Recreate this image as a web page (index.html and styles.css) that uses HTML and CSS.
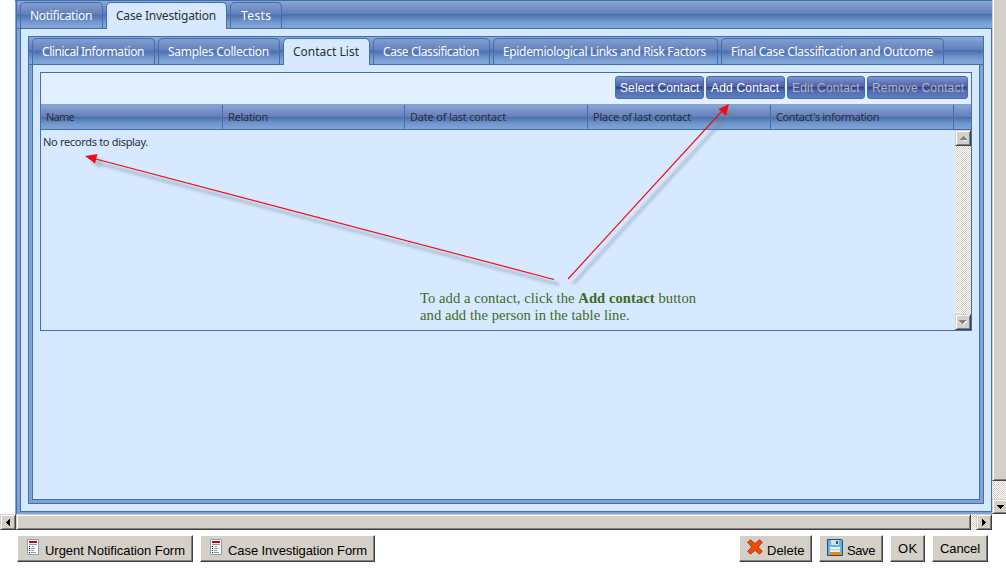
FILE: index.html
```html
<!DOCTYPE html>
<html lang="en">
<head>
<meta charset="utf-8">
<title>Case Investigation</title>
<link rel="stylesheet" href="styles.css">
</head>
<body>
<div class="window">
  <div class="viewport">
    <main class="panel outer">
      <nav class="strip">
        <div class="tab t1"><span>Notification</span></div>
        <div class="tab t2 active"><span>Case Investigation</span></div>
        <div class="tab t3"><span>Tests</span></div>
      </nav>
      <div class="page">
        <section class="panel inner">
          <nav class="strip">
            <div class="tab s1"><span>Clinical Information</span></div>
            <div class="tab s2"><span>Samples Collection</span></div>
            <div class="tab s3 active"><span>Contact List</span></div>
            <div class="tab s4"><span>Case Classification</span></div>
            <div class="tab s5"><span>Epidemiological Links and Risk Factors</span></div>
            <div class="tab s6"><span>Final Case Classification and Outcome</span></div>
          </nav>
          <div class="page">
            <div class="grid">
              <div class="tools">
                <button class="tool b1"><span>Select Contact</span></button>
                <button class="tool b2"><span>Add Contact</span></button>
                <button class="tool b3 off"><span>Edit Contact</span></button>
                <button class="tool b4 off"><span>Remove Contact</span></button>
              </div>
              <div class="head">
                <div class="h1"><span>Name</span></div>
                <div class="h2"><span>Relation</span></div>
                <div class="h3"><span>Date of last contact</span></div>
                <div class="h4"><span>Place of last contact</span></div>
                <div class="h5"><span>Contact's information</span></div>
                <div></div>
              </div>
              <div class="rows">
                <p class="empty"><span>No records to display.</span></p>
                <div class="vbar">
                  <div class="sb"><svg width="7" height="5"><path d="M1 5h7v-1h-1z" fill="#fff"/><path d="M3 0h1v1h1v1h1v1h1v1H0V3h1V2h1V1h1z" fill="#808080"/></svg></div>
                  <div class="sb"><svg width="8" height="5"><path d="M4 5h1V4h1V3h1V2h1V1H7L4 4z" fill="#fff"/><path d="M0 0h7v1H6v1H5v1H4v1H3V3H2V2H1V1H0z" fill="#808080"/></svg></div>
                </div>
              </div>
            </div>
          </div>
        </section>
      </div>
    </main>
    <div class="side"><div class="thumb"></div><div class="track"></div><div class="sb"><svg width="7" height="4"><path d="M0 0h7v1H6v1H5v1H4v1H3V3H2V2H1V1H0z"/></svg></div></div>
  </div>
  <div class="hbar"><div class="sb"><svg width="4" height="7"><path d="M4 0v7H3V6H2V5H1V4H0V3h1V2h1V1h1V0z"/></svg></div><div class="thumb"></div><div class="track"></div><div class="sb"><svg width="4" height="7"><path d="M0 0h1v1h1v1h1v1h1v1H3v1H2v1H1v1H0z"/></svg></div></div>
  <footer class="actions">
    <button class="btn a1"><svg width="12" height="16"><use href="#doc"/></svg><span>Urgent Notification Form</span></button>
    <button class="btn a2"><svg width="12" height="16"><use href="#doc"/></svg><span>Case Investigation Form</span></button>
    <button class="btn a3"><svg width="16" height="16" viewBox="0 0 16 16"><path d="M3.500.8 8 4.600 12.500.8 15.300 3.300 11.200 8l4.100 4.300-2.800 2.900L8 11.300l-4.500 3.900L.7 12.300 4.800 8 .7 3.300z" fill="#f84a00" stroke="#a4411f"/></svg><span>Delete</span></button>
    <button class="btn a4"><svg width="16" height="17" viewBox="0 0 16 17"><path d="M.5.5h14l1 1v15H.5z" fill="#63b5e8" stroke="#244f72"/><path d="M4 1h8v5H4z" fill="#d3e4e8"/><path d="M9 2h2v3H9z" fill="#345868"/><path d="M3 8h10v5H3z" fill="#e8eef2"/><path d="M3 10h10v1H3z" fill="#bdcbd4"/><path d="M3 13h10v3H3z" fill="#f88400"/></svg><span>Save</span></button>
    <button class="btn a5"><span>OK</span></button>
    <button class="btn a6"><span>Cancel</span></button>
  </footer>
  <svg class="notes" width="1006" height="580">
    <defs>
      <filter id="soft" x="-10%" y="-10%" width="120%" height="120%"><feGaussianBlur stdDeviation="1.8"/></filter>
      <g id="doc"><path d="M.5.5h11v15H.5z" fill="#f4fbff" stroke="#86a3b5"/><path d="M2 2h8v2H2z" fill="#d00000"/><path d="M2 5h8v1H2zM5 7h2v1H5zM4 9h4v1H4zM4 11h3v1H4zM4 13h5v1H4z" fill="#999"/><path d="M2 7h1v1H2zM2 9h1v1H2zM2 11h1v1H2zM2 13h1v1H2z" fill="#111"/></g>
      <g id="heads"><path d="M85 156l12.500-2-2.500 9.500zM729 104l-3 12-7.500-7z" fill="currentColor"/></g>
      <path id="lines" d="M554 279.500 92 158M568 279 723 110" fill="none" stroke="currentColor"/>
    </defs>
    <g class="shade" transform="translate(5 5)" filter="url(#soft)"><use href="#lines" stroke-width="3"/><use href="#heads"/></g>
    <g class="red"><use href="#lines" stroke-width="1.150"/><use href="#heads"/></g>
  </svg>
  <p class="hint"><span>To add a contact, click the <b>Add contact</b> button</span><br><span>and add the person in the table line.</span></p>
</div>
</body>
</html>
```
FILE: styles.css
```css
* { box-sizing: border-box; }
body { margin: 0; background: #fff; color: #2b2f36; font: 12px/16px "Noto Sans", sans-serif; }
p { margin: 0; }
button { font: inherit; letter-spacing: inherit; padding: 0; margin: 0; border: 0; }
span { white-space: nowrap; }
svg { display: block; flex: none; }
.window { position: relative; width: 1006px; height: 580px; overflow: hidden; }
.viewport { display: flex; height: 514px; padding-left: 15px; }
.panel { display: flex; flex-direction: column; background: #7fa3d7; border: 1px solid #426eb0; }
.outer { width: 977px; border-width: 1px 0 0; padding: 0 0 2px; box-shadow: inset 1px 0 #7fa3d7, inset 2px 0 #426eb0; }
.strip { display: flex; gap: 3px; height: 28px; padding-top: 1px; border-bottom: 1px solid #426eb0; background: linear-gradient(#8ba9d6 0, #7795ca 20%, #657fba 47%, #4a70b0 50%, #7197cd 76%, #80a4d7 90%); }
.outer > .strip { margin-left: 2px; padding-left: 3px; }
.tab { height: 26px; padding: 5px 0 0 9px; border: 1px solid #426eb0; border-bottom: 0; border-radius: 5px 5px 0 0; color: #fff; background: linear-gradient(#819fd0 0, #657fba 45%, #4a70b0 48%, #7197cd 76%, #80a4d7 90%); }
.tab.active { height: 27px; color: #2b2f36; background: #d7e9ff; }
.t1 { width: 83px; letter-spacing: -.3px; }
.t2 { width: 121px; letter-spacing: -.21px; }
.t3 { width: 52px; padding-left: 10px; letter-spacing: .4px; }
.page { flex: 1; background: #d7e9ff; border: 1px solid #426eb0; border-top: 0; }
.outer > .page { margin-left: 5px; padding: 7px; }
.inner { height: 468px; width: 956px; }
.inner > .strip { padding-left: 3px; }
.inner > .page { margin: 0 3px 3px; padding: 7px; }
.s1 { width: 123px; letter-spacing: -.445px; }
.s2 { width: 122px; letter-spacing: -.3px; }
.s3 { width: 87px; }
.s4 { width: 117px; letter-spacing: -.41px; }
.s5 { width: 225px; letter-spacing: -.342px; }
.s6 { width: 223px; letter-spacing: -.307px; }
.grid { width: 932px; height: 259px; border: 1px solid #426eb0; }
.tools { display: flex; gap: 2px; justify-content: flex-end; height: 31px; padding: 3px 3px 0; background: #e2efff; font-family: "Liberation Sans", Arial, sans-serif; letter-spacing: .2px; }
.tool { height: 23px; color: #fff; border: 1px solid #426eb0; border-radius: 3px; text-align: left; padding: 0 0 0 4px; background: linear-gradient(#7c98d0 0, #6278bb 25%, #535fa8 45%, #2f4389 50%, #4f6bb1 65%, #5e7dc3 100%); }
.tool.off { color: #b3b3b8; }
.b1 { width: 89px; letter-spacing: .1px; }
.b2 { width: 79px; }
.b3 { width: 78px; }
.b4 { width: 101px; }
.head { display: grid; grid-template-columns: 182px 182px 183px 183px 183px 17px; height: 26px; font-size: 11px; border-top: 1px solid #84a3c6; border-bottom: 1px solid #426eb0; background: linear-gradient(#89a7d8 0, #657fba 48%, #4a70b0 52%, #7197cd 78%, #80a4d7 100%); }
.head div { padding: 4px 0 0 5px; border-right: 1px solid #426eb0; }
.head div:last-child { border: 0; }
.h1 { letter-spacing: -.75px; }
.h2 { letter-spacing: -.29px; }
.h3 { letter-spacing: -.19px; }
.h4 { letter-spacing: -.217px; }
.h5 { letter-spacing: -.41px; }
.rows { display: flex; justify-content: space-between; height: 200px; font-size: 11px; }
.empty { padding: 4px 0 0 2px; letter-spacing: -.31px; }
.vbar { display: flex; flex-direction: column; justify-content: space-between; width: 16px; }
.vbar, .track { background: repeating-conic-gradient(#d4d0c8 0 25%, #fff 0 50%) 0 0 / 2px 2px; }
.sb, .thumb { background: #d4d0c8; border: 1px solid; border-color: #d4d0c8 #404040 #404040 #d4d0c8; box-shadow: inset 1px 1px #fff, inset -1px -1px #808080; }
.sb { display: flex; align-items: center; justify-content: center; width: 16px; height: 16px; flex: none; }
.side { width: 14px; display: flex; flex-direction: column; overflow: hidden; }
.side .thumb { height: 481px; width: 16px; border-top: 0; box-shadow: inset 1px 0 #fff, inset -1px -1px #808080; }
.side .track { height: 18px; }
.side .sb { height: 15px; }
.hbar { display: flex; width: 992px; height: 16px; }
.hbar .thumb { width: 955px; }
.hbar .track { width: 5px; }
.actions { display: flex; height: 27px; margin-top: 5px; padding-left: 17px; font: 13px/16px "Liberation Sans", Arial, sans-serif; }
.btn { display: flex; height: 27px; color: #000; background: #d4d0c8; border: 1px solid; border-color: #fff #404040 #404040 #fff; box-shadow: inset -1px -1px #808080; padding: 3px 0 0 9px; gap: 6px; }
.btn span { margin-top: 4px; }
.a1 { width: 176px; letter-spacing: -.04px; }
.a2 { width: 175px; margin-left: 7px; letter-spacing: -.08px; }
.a3 { width: 73px; margin-left: 364px; padding-left: 7px; gap: 4px; }
.a4 { width: 64px; margin-left: 7px; padding-left: 7px; gap: 4px; letter-spacing: -.4px; }
.a5 { width: 35px; margin-left: 7px; padding-left: 7px; letter-spacing: .5px; }
.a6 { width: 56px; margin-left: 7px; padding-left: 7px; letter-spacing: -.08px; }
.a5 span, .a6 span { margin-top: 2px; }
.notes { position: absolute; left: 0; top: 0; pointer-events: none; }
.red { color: #f50a14; }
.shade { color: #6d7d92; opacity: .4; }
.hint { position: absolute; left: 420px; top: 290px; color: #3f6b1c; font: 14.6px/17px "Liberation Serif", "Times New Roman", serif; letter-spacing: .06px; }
```
